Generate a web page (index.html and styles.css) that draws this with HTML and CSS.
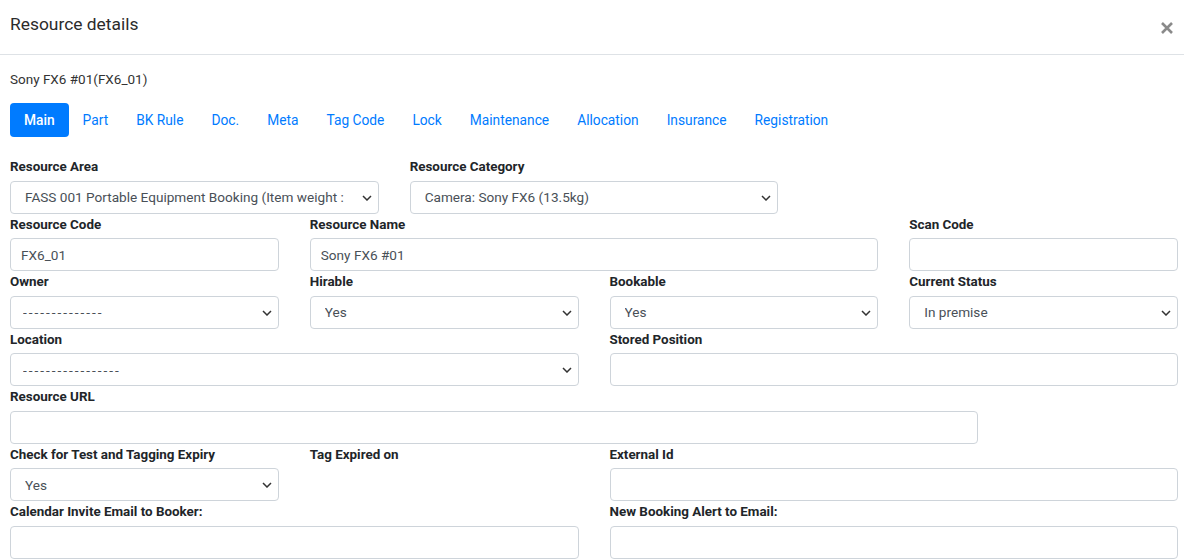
FILE: index.html
```html
<!DOCTYPE html>
<html lang="en">
<head>
<meta charset="utf-8">
<title>Resource details</title>
<link rel="stylesheet" href="styles.css">
</head>
<body>
<div class="modal">
  <div class="modal-header">
    <h5 class="modal-title">Resource details</h5>
    <button class="close" type="button" aria-label="Close">
      <svg width="14" height="14" viewBox="0 0 14 14"><path d="M2 2 L12 12 M12 2 L2 12" stroke="#8a8a8a" stroke-width="2.6" stroke-linecap="butt"/></svg>
    </button>
  </div>
  <div class="modal-body">
    <p class="subtitle">Sony FX6 #01(FX6_01)</p>
    <ul class="tabs">
      <li><a class="tab active">Main</a></li>
      <li><a class="tab">Part</a></li>
      <li><a class="tab">BK Rule</a></li>
      <li><a class="tab">Doc.</a></li>
      <li><a class="tab">Meta</a></li>
      <li><a class="tab">Tag Code</a></li>
      <li><a class="tab">Lock</a></li>
      <li><a class="tab">Maintenance</a></li>
      <li><a class="tab">Allocation</a></li>
      <li><a class="tab">Insurance</a></li>
      <li><a class="tab">Registration</a></li>
    </ul>
    <form class="form">
      <div class="row">
        <div class="field span-4">
          <label>Resource Area</label>
          <div class="select-wrap">
            <select class="control"><option>FASS 001 Portable Equipment Booking (Item weight :</option></select>
            <svg class="chev" width="10" height="6" viewBox="0 0 10 6"><path d="M1 1 L5 5 L9 1" fill="none" stroke="#333" stroke-width="1.5"/></svg>
          </div>
        </div>
        <div class="field span-4">
          <label>Resource Category</label>
          <div class="select-wrap">
            <select class="control"><option>Camera: Sony FX6 (13.5kg)</option></select>
            <svg class="chev" width="10" height="6" viewBox="0 0 10 6"><path d="M1 1 L5 5 L9 1" fill="none" stroke="#333" stroke-width="1.5"/></svg>
          </div>
        </div>
      </div>
      <div class="row">
        <div class="field span-3">
          <label>Resource Code</label>
          <input class="control" type="text" value="FX6_01">
        </div>
        <div class="field span-6">
          <label>Resource Name</label>
          <input class="control" type="text" value="Sony FX6 #01">
        </div>
        <div class="field span-3">
          <label>Scan Code</label>
          <input class="control" type="text" value="">
        </div>
      </div>
      <div class="row">
        <div class="field span-3">
          <label>Owner</label>
          <div class="select-wrap">
            <select class="control dashes"><option>--------------</option></select>
            <svg class="chev" width="10" height="6" viewBox="0 0 10 6"><path d="M1 1 L5 5 L9 1" fill="none" stroke="#333" stroke-width="1.5"/></svg>
          </div>
        </div>
        <div class="field span-3">
          <label>Hirable</label>
          <div class="select-wrap">
            <select class="control"><option>Yes</option></select>
            <svg class="chev" width="10" height="6" viewBox="0 0 10 6"><path d="M1 1 L5 5 L9 1" fill="none" stroke="#333" stroke-width="1.5"/></svg>
          </div>
        </div>
        <div class="field span-3">
          <label>Bookable</label>
          <div class="select-wrap">
            <select class="control"><option>Yes</option></select>
            <svg class="chev" width="10" height="6" viewBox="0 0 10 6"><path d="M1 1 L5 5 L9 1" fill="none" stroke="#333" stroke-width="1.5"/></svg>
          </div>
        </div>
        <div class="field span-3">
          <label>Current Status</label>
          <div class="select-wrap">
            <select class="control"><option>In premise</option></select>
            <svg class="chev" width="10" height="6" viewBox="0 0 10 6"><path d="M1 1 L5 5 L9 1" fill="none" stroke="#333" stroke-width="1.5"/></svg>
          </div>
        </div>
      </div>
      <div class="row">
        <div class="field span-6">
          <label>Location</label>
          <div class="select-wrap">
            <select class="control dashes"><option>-----------------</option></select>
            <svg class="chev" width="10" height="6" viewBox="0 0 10 6"><path d="M1 1 L5 5 L9 1" fill="none" stroke="#333" stroke-width="1.5"/></svg>
          </div>
        </div>
        <div class="field span-6">
          <label>Stored Position</label>
          <input class="control" type="text" value="">
        </div>
      </div>
      <div class="row">
        <div class="field span-10">
          <label>Resource URL</label>
          <input class="control" type="text" value="">
        </div>
      </div>
      <div class="row">
        <div class="field span-3">
          <label>Check for Test and Tagging Expiry</label>
          <div class="select-wrap">
            <select class="control"><option>Yes</option></select>
            <svg class="chev" width="10" height="6" viewBox="0 0 10 6"><path d="M1 1 L5 5 L9 1" fill="none" stroke="#333" stroke-width="1.5"/></svg>
          </div>
        </div>
        <div class="field span-3">
          <label>Tag Expired on</label>
        </div>
        <div class="field span-6">
          <label>External Id</label>
          <input class="control" type="text" value="">
        </div>
      </div>
      <div class="row">
        <div class="field span-6">
          <label>Calendar Invite Email to Booker:</label>
          <input class="control" type="text" value="">
        </div>
        <div class="field span-6">
          <label>New Booking Alert to Email:</label>
          <input class="control" type="text" value="">
        </div>
      </div>
    </form>
  </div>
</div>
</body>
</html>
```

FILE: styles.css
```css
* { box-sizing: border-box; }
html, body {
  margin: 0;
  padding: 0;
  background: #fff;
}
body {
  font-family: Roboto, "Liberation Sans", Arial, sans-serif;
  font-size: 14px;
  color: #212529;
  overflow: hidden;
}
.modal {
  width: 1184px;
}
.modal-header {
  height: 55px;
  border-bottom: 1px solid #dee2e6;
  display: flex;
  justify-content: space-between;
  align-items: flex-start;
  padding: 13px 10px 0 10px;
}
.modal-title {
  margin: 0;
  font-size: 17.4px;
  font-weight: 400;
  line-height: 22px;
  color: #2b2b2b;
}
.close {
  border: 0;
  background: transparent;
  padding: 0;
  margin: 8px 0 0 0;
  width: 14px;
  height: 14px;
  display: flex;
}
.modal-body {
  padding: 0 6px 0 10px;
}
.subtitle {
  margin: 14px 0 0 0;
  font-size: 13.5px;
  line-height: 21px;
  color: #333;
}
.tabs {
  list-style: none;
  margin: 13px 0 0 0;
  padding: 0;
  display: flex;
}
.tab {
  display: block;
  padding: 0 14px;
  height: 34px;
  line-height: 34px;
  color: #007bff;
  font-size: 13.75px;
  border-radius: 4px;
}
.tab.active {
  background: #007bff;
  color: #fff;
  font-weight: 500;
}
.form {
  margin-top: 19px;
}
.row {
  display: grid;
  grid-template-columns: repeat(12, 1fr);
  column-gap: 31px;
}
.span-3 { grid-column: span 3; }
.span-4 { grid-column: span 4; }
.span-6 { grid-column: span 6; }
.span-10 { grid-column: span 10; }
.field label {
  display: block;
  font-size: 13.4px;
  font-weight: 700;
  line-height: 21px;
  margin-bottom: 3.5px;
  color: #212529;
  white-space: nowrap;
}
.control {
  display: block;
  width: 100%;
  height: 33px;
  border: 1px solid #ced4da;
  border-radius: 4px;
  background: #fff;
  font-family: Roboto, "Liberation Sans", Arial, sans-serif;
  font-size: 13.6px;
  color: #495057;
  padding: 0 10px;
  margin: 0;
  outline: none;
}
.select-wrap {
  position: relative;
}
select.control {
  -webkit-appearance: none;
  appearance: none;
  padding: 0 26px 0 14px;
}
select.dashes {
  letter-spacing: 2px;
  padding-left: 12px;
}
.chev {
  position: absolute;
  right: 7px;
  top: 14px;
  pointer-events: none;
}
```
